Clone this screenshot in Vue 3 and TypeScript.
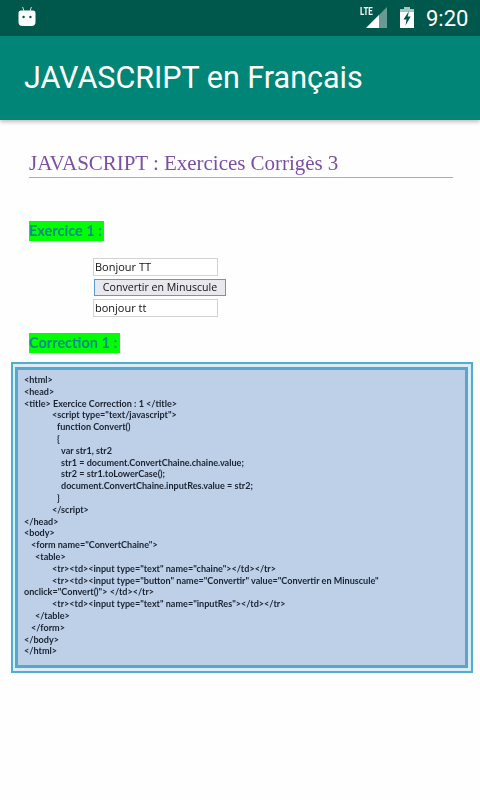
<script setup lang="ts">
const codeLines: { text: string; indent: number }[] = [
  { text: '<html>', indent: 0 },
  { text: '<head>', indent: 0 },
  { text: '<title> Exercice Correction : 1 </title>', indent: 0 },
  { text: '<script type="text/javascript">', indent: 28 },
  { text: 'function Convert()', indent: 33 },
  { text: '{', indent: 33 },
  { text: 'var str1, str2', indent: 37 },
  { text: 'str1 = document.ConvertChaine.chaine.value;', indent: 37 },
  { text: 'str2 = str1.toLowerCase();', indent: 37 },
  { text: 'document.ConvertChaine.inputRes.value = str2;', indent: 37 },
  { text: '}', indent: 33 },
  { text: '</scr' + 'ipt>', indent: 28 },
  { text: '</head>', indent: 0 },
  { text: '<body>', indent: 0 },
  { text: '<form name="ConvertChaine">', indent: 7 },
  { text: '<table>', indent: 11 },
  { text: '<tr><td><input type="text" name="chaine"></td></tr>', indent: 28 },
  { text: '<tr><td><input type="button" name="Convertir" value="Convertir en Minuscule"', indent: 28 },
  { text: 'onclick="Convert()"> </td></tr>', indent: 0 },
  { text: '<tr><td><input type="text" name="inputRes"></td></tr>', indent: 28 },
  { text: '</table>', indent: 11 },
  { text: '</form>', indent: 7 },
  { text: '</body>', indent: 0 },
  { text: '</html>', indent: 0 },
]
</script>

<template>
  <div class="screen">
    <header class="status">
      <svg class="bot" viewBox="0 0 20 20" width="20" height="20" aria-hidden="true">
        <path d="M5.6 0 7 4M14.4 0 13 4" stroke="#cfe3df" stroke-width="1" fill="none" />
        <path d="M4 3.5h12a2.5 2.5 0 0 1 2.5 2.5v9a4 4 0 0 1-4 4h-9a4 4 0 0 1-4-4V6A2.5 2.5 0 0 1 4 3.5z" fill="#fff" />
        <circle cx="6.6" cy="10" r="1.2" fill="#00574b" />
        <circle cx="13.4" cy="10" r="1.2" fill="#00574b" />
      </svg>
      <span class="spacer"></span>
      <span class="lte">LTE</span>
      <svg class="signal" viewBox="0 0 21 21" width="21" height="21" aria-hidden="true">
        <path d="M21 0V21H0Z" fill="#fff" fill-opacity=".4" />
        <path d="M13 8V21H0Z" fill="#fff" />
      </svg>
      <svg class="battery" viewBox="0 0 14 21" width="14" height="21" aria-hidden="true">
        <path d="M4 0h6v2h4v3H0V2h4z" fill="#fff" fill-opacity=".65" />
        <path d="M0 5h14v16H0z" fill="#fff" />
        <path d="M9 4 3.5 12.5h3L5.5 18.5l5.2-9h-3z" fill="#00574b" />
      </svg>
      <span class="time">9:20</span>
    </header>

    <div class="toolbar">JAVASCRIPT en Français</div>

    <main class="page">
      <h1 class="doc-title">JAVASCRIPT : Exercices Corrigès 3</h1>

      <h2 class="tag first">Exercice 1 :</h2>

      <form class="demo" @submit.prevent>
        <div class="field">Bonjour TT</div>
        <div class="demo-btn">Convertir en Minuscule</div>
        <div class="field">bonjour tt</div>
      </form>

      <h2 class="tag second">Correction 1 :</h2>

      <section class="code-box">
        <div class="code-inner">
          <div
            v-for="(line, i) in codeLines"
            :key="i"
            class="code-line"
            :style="{ paddingLeft: line.indent + 'px' }"
          >{{ line.text }}</div>
        </div>
      </section>
    </main>
  </div>
</template>

<style>
html, body { margin: 0; background: #fff; }
</style>

<style scoped>
.screen {
  width: 480px;
  height: 800px;
  overflow: hidden;
  background: #fefefe;
  display: flex;
  flex-direction: column;
}
.status {
  height: 36px;
  flex: none;
  background: #00574b;
  display: flex;
  align-items: center;
  padding: 0 13px 0 17px;
  box-sizing: border-box;
  color: #fff;
  font-family: Roboto, sans-serif;
}
.bot { margin-top: -2px; }
.spacer { flex: 1; }
.lte {
  font-size: 11px;
  font-weight: 700;
  width: 15px;
  margin-right: -9px;
  margin-top: -14px;
  transform: scaleX(.72);
  transform-origin: left;
}
.signal { margin-top: -1px; margin-left: 0; }
.battery { margin-left: 13px; margin-top: -1px; }
.time { font-size: 22px; margin-left: 12px; width: 41px; }
.toolbar {
  height: 84px;
  flex: none;
  background: #008577;
  color: #fff;
  font-family: Roboto, sans-serif;
  font-size: 30.5px;
  line-height: 84px;
  padding: 0 0 0 24px;
  box-sizing: border-box;
  box-shadow: 0 2px 4px rgba(0, 0, 0, .25);
  position: relative;
}
.page {
  flex: 1;
  display: flex;
  flex-direction: column;
  padding: 0 7px 0 11px;
  filter: blur(.4px);
}
.doc-title {
  margin: 30px 20px 0 18px;
  padding-bottom: 1px;
  height: 26px;
  font-family: "Liberation Serif", serif;
  font-weight: 400;
  font-size: 21px;
  letter-spacing: -.03px;
  line-height: 26px;
  color: #7b4fa3;
  border-bottom: 1px solid #8fb2dc;
}
.tag {
  align-self: flex-start;
  margin: 0 0 0 18px;
  padding: 0;
  height: 20px;
  background: #00ff00;
  color: #0a8a8c;
  font-family: Lato, sans-serif;
  font-weight: 700;
  font-size: 14.5px;
  line-height: 20px;
  white-space: nowrap;
}
.first { margin-top: 43px; width: 75px; }
.second { margin-top: 16px; width: 91px; }
.demo {
  margin: 17px 0 0 82px;
  display: flex;
  flex-direction: column;
  align-items: flex-start;
  gap: 3px;
  font-family: "Open Sans", sans-serif;
  font-size: 11px;
  color: #111;
}
.field {
  box-sizing: border-box;
  width: 125px;
  height: 18px;
  border: 1px solid #d2d2d2;
  background: #fff;
  padding-left: 1px;
  line-height: 16px;
}
.demo-btn {
  box-sizing: border-box;
  width: 132px;
  height: 17px;
  margin-left: 1px;
  border: 1px solid #5b9bd5;
  background: #e8e8ee;
  font-size: 10.6px;
  line-height: 15px;
  text-align: center;
}
.code-box {
  margin-top: 9px;
  box-sizing: border-box;
  width: 462px;
  height: 311px;
  border: 2px solid #4eaecb;
  padding: 3px 3px 3px 2px;
  background: #dcecf4;
}
.code-inner {
  box-sizing: border-box;
  height: 100%;
  border: 3px solid #5ba5cd;
  background: #bdd0e8;
  padding: 4px 0 0 6px;
  font-family: Lato, sans-serif;
  font-weight: 700;
  font-size: 9.07px;
  line-height: 11.8px;
  color: #1a2230;
}
.code-line { white-space: nowrap; }
</style>
